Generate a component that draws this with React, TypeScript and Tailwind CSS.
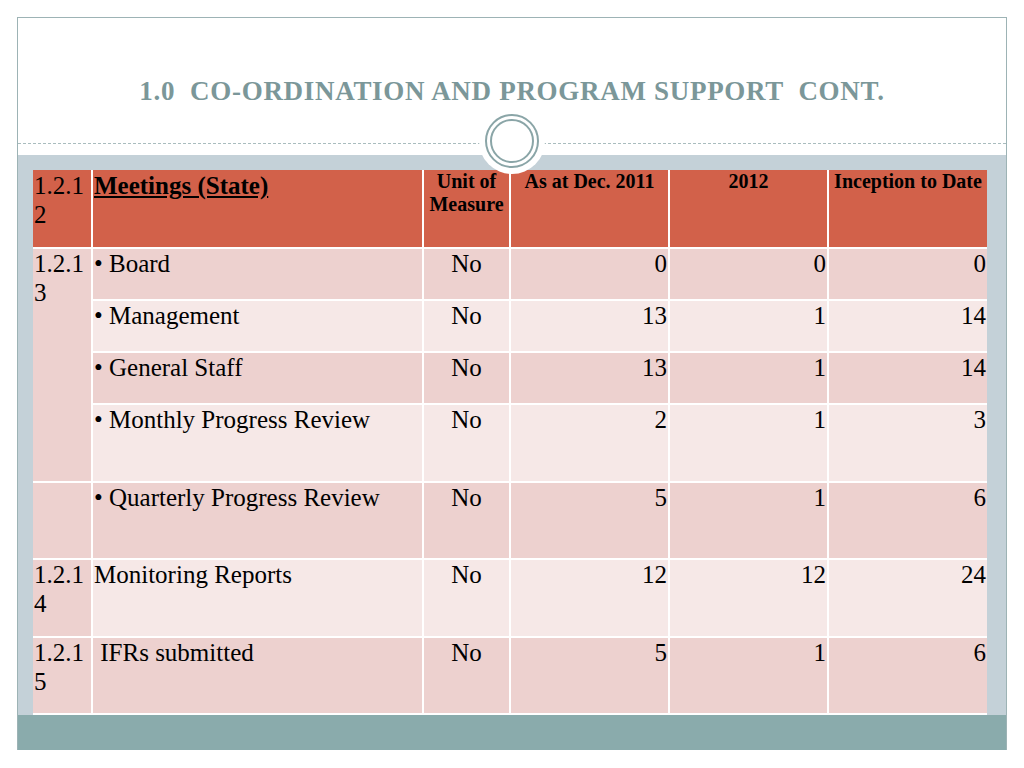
const serif = { fontFamily: '"Liberation Serif", "Times New Roman", serif' }

type Row = {
  id?: string
  span?: number
  skipId?: boolean
  label: string
  unit: string
  dec: string
  y2012: string
  total: string
  h: string
  bg: string
}

const DARK = 'bg-[#edd1cf]'
const LIGHT = 'bg-[#f6e8e7]'

const rows: Row[] = [
  { id: '1.2.13', span: 4, label: '• Board', unit: 'No', dec: '0', y2012: '0', total: '0', h: 'h-[52px]', bg: DARK },
  { skipId: true, label: '• Management', unit: 'No', dec: '13', y2012: '1', total: '14', h: 'h-[52px]', bg: LIGHT },
  { skipId: true, label: '• General Staff', unit: 'No', dec: '13', y2012: '1', total: '14', h: 'h-[52px]', bg: DARK },
  { skipId: true, label: '• Monthly Progress Review', unit: 'No', dec: '2', y2012: '1', total: '3', h: 'h-[78px]', bg: LIGHT },
  { id: '', label: '• Quarterly Progress Review', unit: 'No', dec: '5', y2012: '1', total: '6', h: 'h-[77px]', bg: DARK },
  { id: '1.2.14', label: 'Monitoring Reports', unit: 'No', dec: '12', y2012: '12', total: '24', h: 'h-[78px]', bg: LIGHT },
  { id: '1.2.15', label: '\u00a0IFRs submitted', unit: 'No', dec: '5', y2012: '1', total: '6', h: 'h-[77px]', bg: DARK },
]

export default function App() {
  return (
    <div className="w-[1024px] h-[768px] bg-white pt-[17px] px-[17px]" style={serif}>
      <div className="w-[990px] h-[733px] border-l border-t border-r border-[#9db3b5] flex flex-col">
        {/* title area */}
        <div className="relative h-[138px] bg-white">
          <div className="h-[125px] flex items-center justify-center pt-[21px]">
            <h1 className="text-[27px] font-bold text-[#7b9799] tracking-[0.7px] whitespace-pre">
              1.0  CO-ORDINATION AND PROGRAM SUPPORT  CONT.
            </h1>
          </div>
          <div className="border-t border-dashed border-[#a9bcbe]" />
          {/* medallion */}
          <div className="absolute left-[461px] top-[90px] w-[66px] h-[66px] rounded-full bg-white flex items-center justify-center">
            <div className="w-[54px] h-[54px] rounded-full border-2 border-[#8aa5a7] flex items-center justify-center">
              <div className="w-[44px] h-[44px] rounded-full border-2 border-[#8aa5a7]" />
            </div>
          </div>
        </div>

        {/* content */}
        <div className="h-[560px] bg-[#c4d1d8] pt-[15px] pl-[15px]">
          <table className="border-collapse text-black text-[25px] leading-[29px]">
            <colgroup>
              <col className="w-[59px]" />
              <col className="w-[331px]" />
              <col className="w-[87px]" />
              <col className="w-[159px]" />
              <col className="w-[159px]" />
              <col className="w-[159px]" />
            </colgroup>
            <thead>
              <tr className="h-[78px] bg-[#d2614a] align-top">
                <th className="border-2 border-white border-t-0 border-l-0 px-[1px] pt-[1px] text-left font-normal break-all">1.2.12</th>
                <th className="border-2 border-white border-t-0 px-[1px] pt-[1px] text-left font-bold underline">Meetings (State)</th>
                <th className="border-2 border-white border-t-0 px-0 pt-0 text-center font-bold text-[20px] leading-[23px]">Unit of Measure</th>
                <th className="border-2 border-white border-t-0 px-0 pt-0 text-center font-bold text-[20px] leading-[23px]">As at Dec. 2011</th>
                <th className="border-2 border-white border-t-0 px-0 pt-0 text-center font-bold text-[20px] leading-[23px]">2012</th>
                <th className="border-2 border-white border-t-0 border-r-0 px-0 pt-0 text-center font-bold text-[20px] leading-[23px]">Inception to Date</th>
              </tr>
            </thead>
            <tbody>
              {rows.map((r, i) => (
                <tr key={i} className={`${r.h} ${r.bg} align-top`}>
                  {!r.skipId && (
                    <td rowSpan={r.span ?? 1} className={`border-2 border-white border-l-0 px-[1px] pt-0 break-all ${DARK}`}>
                      {r.id}
                    </td>
                  )}
                  <td className="border-2 border-white px-[1px] pt-0">{r.label}</td>
                  <td className="border-2 border-white px-[1px] pt-0 text-center">{r.unit}</td>
                  <td className="border-2 border-white px-[1px] pt-0 text-right">{r.dec}</td>
                  <td className="border-2 border-white px-[1px] pt-0 text-right">{r.y2012}</td>
                  <td className="border-2 border-white border-r-0 px-[1px] pt-0 text-right">{r.total}</td>
                </tr>
              ))}
            </tbody>
          </table>
        </div>

        {/* footer band */}
        <div className="h-[35px] bg-[#8aabac]" />
      </div>
    </div>
  )
}
